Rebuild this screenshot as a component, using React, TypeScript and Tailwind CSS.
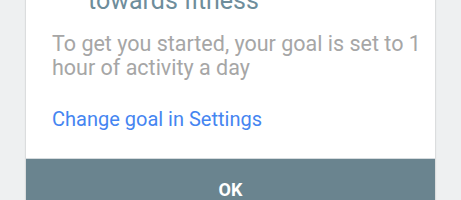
import { Activity } from "lucide-react";

const App = () => {
  return (
    <div
      className="h-[200px] w-full overflow-hidden bg-[#eef0f1] px-[26px]"
      style={{ fontFamily: "Roboto, 'Noto Sans', sans-serif" }}
    >
      <div className="flex flex-col bg-white shadow-[0_0_1px_1px_rgba(0,0,0,0.08)]">
        {/* Body */}
        <div className="-mt-[47px] pl-[26px] pr-[12px]">
          <div className="flex gap-[12px]">
            <Activity className="mt-[4px] h-6 w-6 shrink-0 text-[#6e8d9b]" />
            <h2 className="text-[25px] leading-[32px] text-[#6e8d9b]">
              Take the first step
              <br />
              towards fitness
            </h2>
          </div>

          <p className="mt-[14.5px] text-[21.5px] leading-[24.3px] text-[#a6a6a6]">
            To get you started, your goal is set to 1 hour of activity a day
          </p>

          <a className="mt-[27.4px] block text-[20px] leading-[24px] text-[#4585f1]">
            Change goal in Settings
          </a>
        </div>

        {/* Footer button */}
        <button
          type="button"
          className="mt-[26.5px] h-[64px] border-t border-[#d5dbde] bg-[#6a848f] text-center text-[18px] font-bold leading-[24px] text-white"
        >
          OK
        </button>
      </div>
    </div>
  );
};

export default App;
